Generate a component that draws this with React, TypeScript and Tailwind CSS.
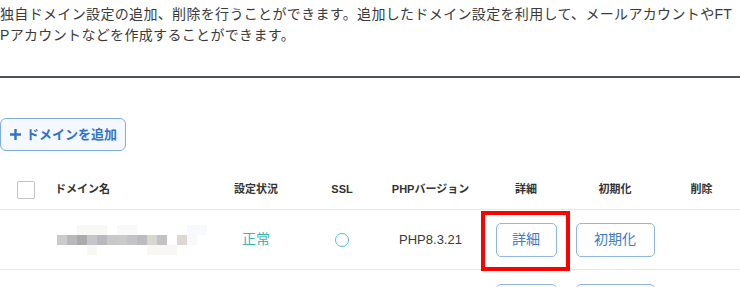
import React from "react";

const FONT = '"Liberation Sans", "Noto Sans CJK JP", sans-serif';

function Blur() {
  const main = ["#cbcbcb", "#b9b9bd", "#acaaaa", "#c6c6ca", "#b9b9bd", "#c8c8c6", "#cacaca", "#c4c4c8", "#bcbcc0", "#d9d6d0", "#c2c2c6"];
  return (
    <div className="relative h-[34px] w-[150px]">
      <div className="absolute left-[2px] top-[12px] flex h-[10px]">
        {main.map((c, i) => (
          <div key={i} className="h-[10px] w-[10px]" style={{ background: c }} />
        ))}
        <div className="h-[10px] w-[10px]" />
        <div className="h-[10px] w-[10px] bg-[#dcd7d0]" />
        <div className="h-[10px] w-[10px] bg-[#f6f8fc]" />
      </div>
      <div className="absolute left-[22px] top-[2px] h-[10px] w-[30px] bg-[#f8f8f6]" />
      <div className="absolute left-[62px] top-[2px] h-[10px] w-[20px] bg-[#f9f9fb]" />
      <div className="absolute left-[32px] top-[22px] h-[10px] w-[10px] bg-[#f7f7f4]" />
      <div className="absolute left-[92px] top-[22px] h-[10px] w-[30px] bg-[#f8f7f4]" />
      <div className="absolute left-[132px] top-[2px] h-[10px] w-[20px] bg-[#f8f9fc]" />
    </div>
  );
}

const COLS = "grid grid-cols-[45px_165px_92px_80px_97px_94px_84px_83px]";

function Row() {
  return (
    <div className={`relative ${COLS} h-[60px] items-center border-b border-[#e8e8e8]`}>
      <div />
      <div className="pl-[10px]">
        <Blur />
      </div>
      <div className="text-center text-[14px] text-[#3db6b1]">正常</div>
      <div className="flex justify-center">
        <div className="h-[14px] w-[14px] rounded-full border-[1.5px] border-[#4fc0cc]" />
      </div>
      <div className="text-center text-[13px] text-[#3a3a3a]">PHP8.3.21</div>
      <div className="flex justify-center">
        <button className="h-[34px] w-[61px] rounded-[5px] border border-[#8db5e6] bg-white text-[14px] text-[#3d7bcf]">
          詳細
        </button>
      </div>
      <div className="flex justify-center">
        <button className="h-[34px] w-[79px] rounded-[5px] border border-[#8db5e6] bg-white text-[14px] text-[#3d7bcf]">
          初期化
        </button>
      </div>
      <div />
      <div className="pointer-events-none absolute left-[481px] top-[1px] h-[60px] w-[89px] border-4 border-[#ff0000]" />
    </div>
  );
}

function PartialRow() {
  return (
    <div className={`${COLS} items-start pt-[14px]`}>
      <div />
      <div />
      <div />
      <div />
      <div />
      <div className="flex justify-center">
        <div className="h-[34px] w-[61px] rounded-[5px] border border-[#8db5e6] bg-white" />
      </div>
      <div className="flex justify-center">
        <div className="h-[34px] w-[79px] rounded-[5px] border border-[#8db5e6] bg-white" />
      </div>
      <div />
    </div>
  );
}

export default function App() {
  return (
    <div className="h-[287px] w-[740px] overflow-hidden bg-white" style={{ fontFamily: FONT }}>
      <p className="break-all pt-[4px] text-[14px] leading-[21px] tracking-[0.34px] text-[#3a3a3a]">
        独自ドメイン設定の追加、削除を行うことができます。追加したドメイン設定を利用して、メールアカウントやFTPアカウントなどを作成することができます。
      </p>
      <div className="mt-[30px] border-t-2 border-[#4d5257]" />
      <div className="mt-[40px]">
        <button className="flex h-[33px] w-[126px] items-center gap-[4px] rounded-[6px] border border-[#7eade6] bg-[#f5f9ff] pl-[8px] text-[13px] font-bold text-[#2f72cc]">
          <svg width="13" height="13" viewBox="0 0 13 13">
            <path d="M6.5 1v11M1 6.5h11" stroke="#2f72cc" strokeWidth="2.4" />
          </svg>
          ドメインを追加
        </button>
      </div>
      <div className={`mt-[19px] ${COLS} h-[40px] items-center border-b border-[#e8e8e8] text-[11px] font-bold text-[#333]`}>
        <div className="flex justify-end pr-[10px]">
          <div className="h-[18px] w-[18px] rounded-[2px] border-[1.5px] border-[#c4c4c4] bg-white" />
        </div>
        <div className="pl-[10px]">ドメイン名</div>
        <div className="text-center">設定状況</div>
        <div className="text-center">SSL</div>
        <div className="text-center">PHPバージョン</div>
        <div className="text-center">詳細</div>
        <div className="text-center">初期化</div>
        <div className="pl-[6px] text-center">削除</div>
      </div>
      <Row />
      <PartialRow />
    </div>
  );
}
